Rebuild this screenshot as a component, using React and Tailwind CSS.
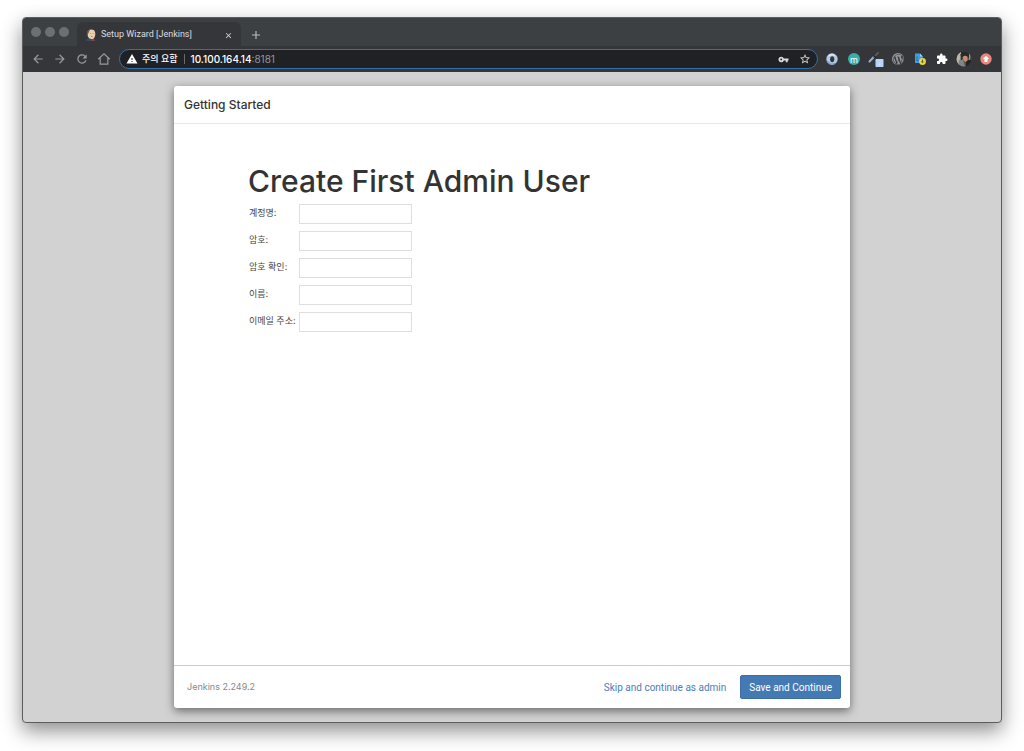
import { FaWordpressSimple } from 'react-icons/fa';
import {
  MdArrowBack,
  MdArrowForward,
  MdRefresh,
  MdWarning,
  MdVpnKey,
  MdStarBorder,
  MdExtension,
  MdClose,
  MdAdd,
} from 'react-icons/md';

const fields = [
  { id: 'username', label: '계정명:', type: 'text' },
  { id: 'password', label: '암호:', type: 'password' },
  { id: 'confirm', label: '암호 확인:', type: 'password' },
  { id: 'fullname', label: '이름:', type: 'text' },
  { id: 'email', label: '이메일 주소:', type: 'email' },
];

const JenkinsIcon = () => (
  <svg viewBox="0 0 12 12" className="size-3 shrink-0">
    <path d="M1 12c.3-2 1.600-3 3.500-3l4 .3c1.200.4 1.800 1.400 2 2.700z" fill="#2f4d66" />
    <path d="M5.800 9.700l3.200-.2.600 2.500H6.500z" fill="#9d3a33" />
    <path d="M2.400 4C2.400 1.700 4 .5 6.300.5c2.500 0 4 1.500 4 4.200 0 3-1.300 5.400-3.600 5.400-2.300 0-4.200-2.100-4.300-4.600z" fill="#ecd0ad" />
    <path d="M2.300 7C1.100 4 2.100.9 5.300.4 4.100 1.500 4.300 2.500 3.500 3.900z" fill="#6b5846" />
    <path d="M5.100 4.600h.9M7.700 4.600h.9M5.900 7.500h1.800" stroke="#7a5f48" strokeWidth=".6" />
  </svg>
);

const HomeIcon = () => (
  <svg viewBox="0 0 14 14" className="size-[14px]" fill="none" stroke="currentColor" strokeWidth="1.200">
    <path d="M1.200 7.300L7 1.800l5.800 5.500M3.200 6v6.200h7.600V6" />
  </svg>
);

const RingIcon = () => (
  <svg viewBox="0 0 12 12" className="size-3">
    <circle cx="6" cy="6" r="5.700" fill="#b4cbe8" />
    <path d="M1.300 8A5 5 0 0 0 9 10.200" fill="none" stroke="#7d9fd0" strokeWidth="1.600" />
    <path d="M2.600 2.600L6 1.500l2.500 1" fill="none" stroke="#e3edf8" strokeWidth="1.200" />
    <ellipse cx="6.200" cy="6.200" rx="2.100" ry="3" fill="#35363a" />
  </svg>
);

const PickerIcon = () => (
  <svg viewBox="0 0 16 16" className="size-4">
    <path d="M1.500 10.500l4.500-4.700" stroke="#8bb7e6" strokeWidth="2" strokeLinecap="round" />
    <path d="M6 6l4-4.200" stroke="#5d5e62" strokeWidth="1.800" strokeLinecap="round" />
    <path d="M5.500 4.400l2.600 2.600" stroke="#222" strokeWidth="1.300" />
    <rect x="7.500" y="8" width="8" height="8" rx=".8" fill="#b3d7fb" />
    <rect x="11" y="12.600" width="1.200" height="1.200" fill="#e9f4ff" />
  </svg>
);

const DocumentIcon = () => (
  <svg viewBox="0 0 12 12" className="size-3">
    <path d="M1 .6h5L8.800 3.400V10H1z" fill="#3d9fe0" />
    <path d="M6 .6L8.800 3.400H6z" fill="#9bd2f5" />
    <path d="M3 3.300v4.400h2" stroke="#1f6fae" fill="none" strokeWidth=".9" />
    <circle cx="8.500" cy="8.500" r="3.400" fill="#f0d546" />
    <path d="M8.500 6.500v3M7.200 8.500l1.300 1.300 1.300-1.300" stroke="#5b5320" fill="none" strokeWidth=".9" />
  </svg>
);

const AvatarIcon = () => (
  <svg viewBox="0 0 16 16" className="size-4">
    <defs>
      <clipPath id="avatar">
        <circle cx="8" cy="8" r="7.500" />
      </clipPath>
    </defs>
    <g clipPath="url(#avatar)">
      <rect width="16" height="16" fill="#57534e" />
      <path d="M0 0h5v6L3 16H0z" fill="#bdb6a5" />
      <path d="M5 0h6l3 4v3l-9-1z" fill="#27282b" />
      <path d="M7 5.500c1-1 3.500-1 4.500.3v3.500L9.500 11 7.300 9z" fill="#c78d6d" />
      <path d="M3 9l4-1 2 8H2z" fill="#80858b" />
      <path d="M10 11l5-4v9h-5z" fill="#222326" />
      <path d="M13.600 3v6" stroke="#a6947c" strokeWidth="1.200" />
      <path d="M5 3l.6 6" stroke="#303134" strokeWidth="1.400" />
    </g>
  </svg>
);

const UpdateIcon = () => (
  <svg viewBox="0 0 12 12" className="size-3">
    <circle cx="6" cy="6" r="5.700" fill="#e8877c" />
    <path d="M6 2.700l3.100 3.200H7.500V9h-3V5.900H2.900z" fill="#fff" />
  </svg>
);

const extensions = [
  { name: 'Ring', icon: <RingIcon /> },
  {
    name: 'Mail',
    icon: (
      <span className="flex size-3 items-center justify-center rounded-full bg-[#3aada8] text-[9px] leading-none text-white">
        m
      </span>
    ),
  },
  { name: 'Color picker', icon: <PickerIcon /> },
  {
    name: 'WordPress',
    icon: (
      <span className="flex size-3 items-center justify-center rounded-full bg-[#98989a] text-[#38373b]">
        <FaWordpressSimple className="size-[11px]" />
      </span>
    ),
  },
  { name: 'Documents', icon: <DocumentIcon /> },
  { name: 'Extensions', icon: <MdExtension className="size-3 text-white" /> },
  { name: 'Profile', icon: <AvatarIcon /> },
  { name: 'Update', icon: <UpdateIcon /> },
];

const NavButton = ({ label, children }) => (
  <button type="button" aria-label={label} className="flex w-[22px] items-center justify-center text-[#98999c]">
    {children}
  </button>
);

const TabBar = () => (
  <div className="flex h-7 items-end bg-[#3c4043]">
    <div className="flex h-full items-center gap-1 px-2">
      <span className="size-[10px] rounded-full bg-[#6d6f71]" />
      <span className="size-[10px] rounded-full bg-[#6d6f71]" />
      <span className="size-[10px] rounded-full bg-[#6d6f71]" />
    </div>
    <div className="flex h-6 w-[164px] items-center rounded-t-md bg-[#35363a] px-2 pt-[2px] text-[#dcdde0]">
      <JenkinsIcon />
      <span className="ml-1 flex-1 truncate font-['Roboto'] text-[9px]">Setup Wizard [Jenkins]</span>
      <button type="button" aria-label="Close tab">
        <MdClose className="size-[9px]" />
      </button>
    </div>
    <button type="button" aria-label="New tab" className="ml-2 flex h-6 items-center pt-[2px] text-[#b9bbbd]">
      <MdAdd className="size-[14px]" />
    </button>
  </div>
);

const Toolbar = () => (
  <div className="flex h-[26px] items-center bg-[#35363a] px-1">
    <NavButton label="Back">
      <MdArrowBack className="size-[14px]" />
    </NavButton>
    <NavButton label="Forward">
      <MdArrowForward className="size-[14px]" />
    </NavButton>
    <NavButton label="Reload">
      <MdRefresh className="size-[14px]" />
    </NavButton>
    <NavButton label="Home">
      <HomeIcon />
    </NavButton>
    <div className="ml-1 flex h-5 flex-1 items-center rounded-full border border-[#3570a8] bg-[#202124] px-[6px] text-[9px] text-white">
      <MdWarning className="size-3" />
      <span className="ml-1 font-medium">주의 요함</span>
      <span className="mx-[6px] h-[10px] w-px bg-[#6a6b6e]" />
      <span className="text-[10px] font-medium">10.100.164.14</span>
      <span className="flex-1 text-[10px] text-[#96989b]">:8181</span>
      <button type="button" aria-label="Saved passwords" className="text-[#dadcdf]">
        <MdVpnKey className="size-[11px]" />
      </button>
      <button type="button" aria-label="Bookmark" className="ml-[10px] text-[#dadcdf]">
        <MdStarBorder className="size-3" />
      </button>
    </div>
    <div className="ml-[3px] flex">
      {extensions.map(({ name, icon }) => (
        <button key={name} type="button" aria-label={name} className="flex w-[22px] items-center justify-center">
          {icon}
        </button>
      ))}
    </div>
  </div>
);

const SetupDialog = () => (
  <form className="mx-auto flex w-full max-w-[676px] flex-1 flex-col rounded-[3px] bg-white shadow-[0_3px_10px_rgba(0,0,0,0.5)]">
    <header className="border-b border-[#e7e7e7] p-[10px]">
      <h4 className="text-[12px] leading-[17px] font-medium text-[#333]">Getting Started</h4>
    </header>
    <main className="flex-1 px-[74px] pt-[38px]">
      <h1 className="text-[30px] leading-[38px] font-medium text-[#333]">Create First Admin User</h1>
      <table className="mt-1 border-separate border-spacing-0">
        <tbody>
          {fields.map(({ id, label, type }) => (
            <tr key={id} className="h-[27px] align-top">
              <td className="w-[51px] pt-[2px] pl-px text-[9px] leading-[14px] text-[#444]">
                <label htmlFor={id} className="whitespace-nowrap">
                  {label}
                </label>
              </td>
              <td>
                <input id={id} type={type} className="block h-5 w-[113px] border border-[#dedede] px-1 text-[9px]" />
              </td>
            </tr>
          ))}
        </tbody>
      </table>
    </main>
    <footer className="flex h-[43px] items-center border-t border-[#ccc] pr-[9px] pl-[13px]">
      <span className="flex-1 text-[9px] text-[#888]">Jenkins 2.249.2</span>
      <button type="button" className="px-[14px] font-['Roboto'] text-[10px] text-[#4a7ebb]">
        Skip and continue as admin
      </button>
      <button
        type="submit"
        className="h-6 rounded-xs border border-[#3c6fa6] bg-[#447ab4] px-2 font-['Roboto'] text-[10px] text-white"
      >
        Save and Continue
      </button>
    </footer>
  </form>
);

export default function App() {
  return (
    <div className="flex min-h-screen flex-col bg-white px-[22px] pt-[17px] pb-7 font-['Inter','Noto_Sans_CJK_KR',sans-serif]">
      <div className="flex flex-1 flex-col overflow-hidden rounded-[4px] border border-[#5b5d5f] bg-[#d2d2d2] shadow-[0_8px_20px_rgba(0,0,0,0.45)]">
        <TabBar />
        <Toolbar />
        <div className="flex flex-1 flex-col px-4 py-[14px]">
          <SetupDialog />
        </div>
      </div>
    </div>
  );
}
